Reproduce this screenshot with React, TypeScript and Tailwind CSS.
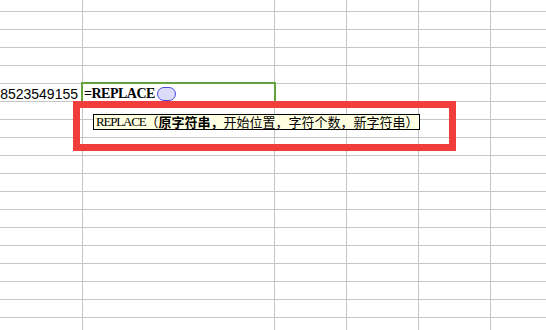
export default function App() {
  const numCols = 7;
  const numRows = 19;
  const cells = [];
  for (let r = 0; r < numRows; r++) {
    for (let c = 0; c < numCols; c++) {
      const isNum = r === 5 && c === 0;
      cells.push(
        <div
          key={`${r}-${c}`}
          className="border-r border-b border-[#c6c6c6] overflow-visible"
        >
          {isNum && (
            <div className="pt-[2px] pr-[4px] text-right text-[14px] leading-[17px] text-black font-['Liberation_Sans',Arial,sans-serif]">
              8523549155
            </div>
          )}
        </div>
      );
    }
  }

  return (
    <div className="relative w-[546px] h-[330px] overflow-hidden bg-white">
      <div className="grid grid-cols-[83px_192px_72px_72px_72px_72px_1fr] grid-rows-[12px_repeat(18,18px)]">
        {cells}
      </div>

      {/* editing cell */}
      <div className="absolute left-[81px] top-[82px] w-[195px] h-[21px] border-2 border-[#62a33f] flex items-start">
        <span className="pl-[1px] pt-[1px] text-[14px] leading-[17px] tracking-[-0.5px] font-bold text-black font-['Liberation_Serif','Times_New_Roman',serif]">
          =REPLACE
        </span>
        <span className="ml-[2px] mt-[3px] w-[19px] h-[14px] rounded-full border border-[#4a4ae0] bg-[#dcdcf8]" />
      </div>

      {/* red highlight */}
      <div className="absolute left-[73px] top-[101px] w-[383px] h-[50px] border-[7px] border-[#f23d3d]" />

      {/* tooltip */}
      <div className="absolute left-[93px] top-[114px] h-[16px] border border-black bg-[#ffffe1] pl-[2px] pr-[1px] flex items-center whitespace-nowrap text-black">
        <span className="text-[13px] leading-[14px] tracking-[-1.2px] font-['Liberation_Serif','Times_New_Roman',serif]">
          REPLACE
        </span>
        <span className="text-[13px] leading-[14px] font-['Noto_Sans_CJK_SC',sans-serif]">
          （<span className="font-bold">原字符串，</span>开始位置，字符个数，新字符串）
        </span>
      </div>
    </div>
  );
}
